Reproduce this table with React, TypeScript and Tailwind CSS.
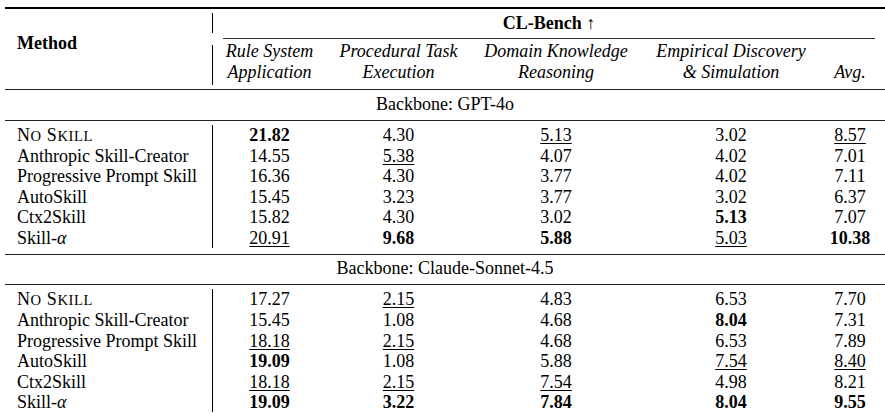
import React from 'react';

type Cell = string; // "b:" bold, "u:" underlined

interface IRow {
  method: React.ReactNode;
  cells: Cell[];
}

const NoSkill = () => (
  <span className="tracking-[0.6px]">
    N<span className="text-[14.6px]">O</span> S<span className="text-[14.6px]">KILL</span>
  </span>
);

const methods: React.ReactNode[] = [
  <NoSkill />,
  'Anthropic Skill-Creator',
  'Progressive Prompt Skill',
  'AutoSkill',
  'Ctx2Skill',
  <span>
    Skill-<i>α</i>
  </span>,
];

const gpt: Cell[][] = [
  ['b:21.82', '4.30', 'u:5.13', '3.02', 'u:8.57'],
  ['14.55', 'u:5.38', '4.07', '4.02', '7.01'],
  ['16.36', '4.30', '3.77', '4.02', '7.11'],
  ['15.45', '3.23', '3.77', '3.02', '6.37'],
  ['15.82', '4.30', '3.02', 'b:5.13', '7.07'],
  ['u:20.91', 'b:9.68', 'b:5.88', 'u:5.03', 'b:10.38'],
];

const claude: Cell[][] = [
  ['17.27', 'u:2.15', '4.83', '6.53', '7.70'],
  ['15.45', '1.08', '4.68', 'b:8.04', '7.31'],
  ['u:18.18', 'u:2.15', '4.68', '6.53', '7.89'],
  ['b:19.09', '1.08', '5.88', 'u:7.54', 'u:8.40'],
  ['u:18.18', 'u:2.15', 'u:7.54', '4.98', '8.21'],
  ['b:19.09', 'b:3.22', 'b:7.84', 'b:8.04', 'b:9.55'],
];

function Value({ v }: { v: Cell }) {
  if (v.startsWith('b:')) return <span className="font-bold">{v.slice(2)}</span>;
  if (v.startsWith('u:'))
    return <span className="underline decoration-1 underline-offset-[2px]">{v.slice(2)}</span>;
  return <span>{v}</span>;
}

function Block({ data }: { data: Cell[][] }) {
  const rows: IRow[] = data.map((cells, i) => ({ method: methods[i], cells }));
  return (
    <div className="flex flex-col">
      {rows.map((row, i) => (
        <div key={i} className="grid grid-cols-[208px_113px_145px_170px_180px_64px] leading-[20.4px]">
          <div className="pl-[12px] border-r border-black whitespace-nowrap">{row.method}</div>
          {row.cells.map((c, j) => (
            <div key={j} className={j === 4 ? 'text-center pr-[6px]' : 'text-center'}>
              <Value v={c} />
            </div>
          ))}
        </div>
      ))}
    </div>
  );
}

export default function App() {
  return (
    <div className="w-[885px] h-[414px] overflow-hidden bg-white text-black text-[18px] [font-family:'Liberation_Serif','Times_New_Roman',serif]">
      <div className="ml-[5px] w-[880px] flex flex-col">
        <div className="mt-[7px] h-[1.5px] bg-black"></div>

        <div className="flex h-[80.5px]">
          <div className="w-[207px] pl-[12px] pt-[24.5px] font-bold leading-[20.4px]">Method</div>
          <div className="w-[1px] flex flex-col">
            <div className="mt-[4.5px] h-[20px] bg-black"></div>
            <div className="mt-[12px] h-[40px] bg-black"></div>
          </div>
          <div className="flex-1 flex flex-col">
            <div className="pt-[4.5px] leading-[20.4px] text-center font-bold">CL-Bench ↑</div>
            <div className="mt-[4.9px] mx-[10px] h-[0.8px] bg-[#333]"></div>
            <div className="mt-[1.6px] grid grid-cols-[113px_145px_170px_180px_64px] items-end italic leading-[21px] text-center whitespace-nowrap">
              <div>
                Rule System
                <br />
                Application
              </div>
              <div>
                Procedural Task
                <br />
                Execution
              </div>
              <div>
                Domain Knowledge
                <br />
                Reasoning
              </div>
              <div>
                Empirical Discovery
                <br />
                &amp; Simulation
              </div>
              <div className="pr-[6px]">Avg.</div>
            </div>
          </div>
        </div>

        <div className="h-[1px] bg-[#222]"></div>
        <div className="pt-[3.7px] leading-[20.4px] text-center">Backbone: GPT-4o</div>
        <div className="mt-[5.9px] h-[1px] bg-[#222]"></div>
        <div className="mt-[3.7px]">
          <Block data={gpt} />
        </div>

        <div className="mt-[5.6px] h-[1.2px] bg-[#222]"></div>
        <div className="pt-[3.3px] leading-[20.4px] text-center">Backbone: Claude-Sonnet-4.5</div>
        <div className="mt-[5.9px] h-[1px] bg-[#222]"></div>
        <div className="mt-[3.4px]">
          <Block data={claude} />
        </div>
      </div>
    </div>
  );
}
